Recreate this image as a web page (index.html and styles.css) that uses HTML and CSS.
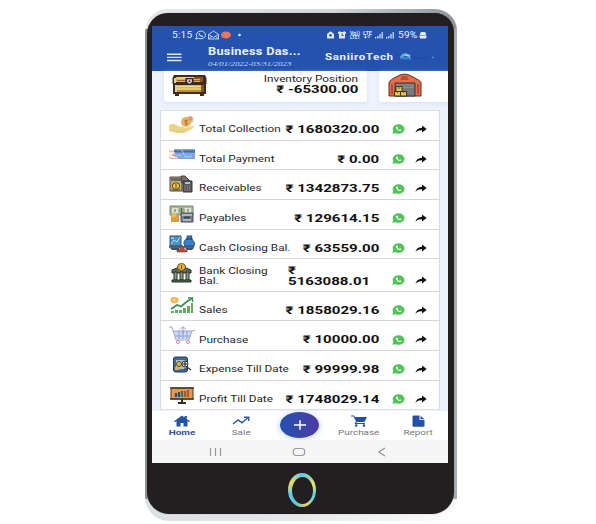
FILE: index.html
```html
<!DOCTYPE html>
<html lang="en">
<head>
<meta charset="utf-8">
<title>Business Dashboard</title>
<link rel="stylesheet" href="styles.css">
</head>
<body>
<svg class="defs" width="0" height="0">
  <symbol id="wa" viewBox="0 0 13 10" preserveAspectRatio="none"><path d="M.3 9.800 1.300 7A5.900 4.700 0 1 1 4 9.200Z" fill="#50c359"/><path d="M4.600 2.500c-1 .5-1 1.600.4 3s3.200 2 4.200 1.200c.6-.5.3-.8-1-1.200l-.8.5C6.400 5.700 5.800 5.100 5.500 4.500l.5-.6c-.3-1-.7-1.600-1.400-1.400Z" fill="#fff"/></symbol>
  <symbol id="share" viewBox="0 0 12 9" preserveAspectRatio="none"><path d="M7 .6 11.700 4 7 7.400V5.300C3.800 5.100 2 5.900.4 8 .9 4.800 3.300 2.900 7 2.700Z" fill="#111"/></symbol>
</svg>
<div class="phone">
  <div class="bezel">
    <div class="screen">
      <header class="header">
        <div class="status">
          <span class="clock"><b>5:15</b></span>
          <svg class="status-left" width="48" height="10" viewBox="0 0 48 10" fill="none" stroke="#cbdcf8">
            <path d="M.7 9 1.800 6.600A4.600 3.800 0 1 1 3.800 8.300Z"/><path d="M4 3.300c0 1.800 2 3 4 3" stroke-width="1.300"/>
            <path d="M13.500 4.500 18.500 1l5 3.500V9h-10Zm0 0 5 3 5-3M13.500 9l3.500-3m6.500 3L20 6" stroke-width=".9"/>
            <ellipse cx="31" cy="5" rx="4.900" ry="3.500" fill="#ed7657" stroke="none"/><circle cx="44.500" cy="5" r="1.300" fill="#e8f0ff" stroke="none"/>
          </svg>
          <svg class="status-right" width="68" height="10" viewBox="0 0 68 10" fill="#dce8fc">
            <path d="m0 4 3.500-2.800L7 4v4.500H0Z"/><circle cx="3.500" cy="5.300" r="1.300" fill="#2552ad"/>
            <path d="m11 2 2-.7 1 .7h2l1-.7 2 .7v1.500l-1 .5v4.500h-6V4l-1-.5Z"/><path d="M15 3.300v2.200h1.600" fill="none" stroke="#2552ad"/>
            <g class="tiny"><text x="23" y="4.600" textLength="10" lengthAdjust="spacingAndGlyphs">Vo))</text><text x="23" y="8.900" textLength="10" lengthAdjust="spacingAndGlyphs">LTE1</text><text x="36" y="4.600" textLength="9" lengthAdjust="spacingAndGlyphs">LTE</text></g>
            <path d="M38.500 5v3M37 6.500l1.500 1.800L40 6.500M42 8.300V5.500m-1.200 1L42 5.300l1.200 1.200" fill="none" stroke="#dce8fc" stroke-width=".8"/>
            <path d="M48 7h1.200v1.500H48zm2.200-1h1.200v2.500h-1.200zm2.200-2h1.200v4.500h-1.200zm2.200-2h1.200v6.500h-1.200zM59 7h1.200v1.500H59zm2.200-1h1.200v2.500h-1.200zm2.200-2h1.200v4.500h-1.200zm2.200-2h1.200v6.500h-1.200z"/>
          </svg>
          <span class="battery"><b>59%</b></span>
          <svg class="battery-icon" width="8" height="8" viewBox="0 0 8 8"><path d="M1 3 2 1h4l1 2v1H1ZM.5 4.500h7v2l-1 1h-5l-1-1Z" fill="#e4edfc"/></svg>
        </div>
        <div class="bar">
          <svg class="menu" width="15" height="9" viewBox="0 0 15 9"><path d="M0 1.300h14.500M0 4.400h14.500M0 7.500h14.500" stroke="#dce7fb" stroke-width="1.400"/></svg>
          <div class="titles"><h1><span>Business Das...</span></h1><p><span>04/01/2022-03/31/2023</span></p></div>
          <div class="brand"><span>SaniiroTech</span></div>
          <svg class="logo" width="38" height="10" viewBox="0 0 38 10"><path d="M1 6C2 1 8-.5 12 4L9 5C7 3 4 4 3 6Z" fill="#69abd8"/><path d="M1 7c3-3 8-3 12 .5H5Z" fill="#2b86ca"/><path d="M6 3c3 0 4 1 5 3" stroke="#c8e7f2" fill="none"/><path d="M14 6h16" stroke="#1f479f" stroke-width="1"/><circle cx="34" cy="5.500" r=".8" fill="#83a5dc"/></svg>
        </div>
      </header>

      <section class="positions">
        <article class="card inventory">
          <svg class="chest" width="35" height="23" viewBox="0 0 35 23"><path d="M2 1h31l1.500 3v6H34v10h-2v2h-4v-2H7v2H3v-2H1V10H.5V4Z" fill="#3d2b1c"/><path d="M4 3h26v5H4zm0 8h27v7H4z" fill="#d8b849"/><path d="M5 3.800h23M5 12.500h25M5 15h25" stroke="#f4e083" stroke-width="1.200"/><path d="M5 6.500h25M5 17h26" stroke="#9c6727"/><path d="M22 3h9v2h-9zm6 0h3v5h-3zm1 8h3v7h-3z" fill="#91502b"/><path d="M2 4h2v5H2zm1 7h2v7H3z" fill="#d6d0bb"/><path d="M13.500 4h8v4.500L17.500 11l-4-2.500Z" fill="#33251b"/><path d="M15 5.200h5v2.800l-2.500 2L15 8Z" fill="#d7ccb0"/><circle cx="17.500" cy="7.200" r=".9" fill="#33251b"/></svg>
          <div class="figures"><p class="caption"><span>Inventory Position</span></p><p class="amount"><span>₹ -65300.00</span></p></div>
        </article>
        <article class="card store">
          <svg width="34" height="24" viewBox="0 0 34 24"><path d="M1 9.500Q1 8 6 5l6-3q4.500-2 9 0l6 3q6 3 6 4.500V23H1Z" fill="#e86d4b" stroke="#533025"/><path d="M7 10h20v13H7Z" fill="#77797b" stroke="#43302a"/><path d="M8 12h18M8 14.500h18" stroke="#96989a" stroke-width=".8"/><path d="M13.500 4h6M12.500 6h8M4 11v10M30 11v10" stroke="#7d382d"/><path d="M6.500 18.500h6V23h-6zm6 0h6V23h-6zm-4.500-5h6v5H8z" fill="#e5c54d" stroke="#3d3522"/><path d="M11 13.500v2.500m-1.500 2.500V20m6-1.500V20" stroke="#6b5522"/></svg>
        </article>
      </section>

      <main class="ledger">
        <div class="row">
          <svg class="pic" width="28" height="20" viewBox="0 0 28 20"><circle cx="22" cy="4.500" r="3.300" fill="#f2b496"/><circle cx="18" cy="7" r="5" fill="#e7b25d"/><path d="M18 4.500v5M16.500 6h3M17 9h2.500" stroke="#8f6535" stroke-width=".9"/><circle cx="22.500" cy="3.500" r="1.500" fill="none" stroke="#db7569"/><path d="M1 10c4-2 7-.5 10 1.500h5c1 0 1 1.500-1 1.500h-4 7l6-2c3 0 2 2 0 3l-8 4H9L1 16Z" fill="#ebd589"/><path d="M2 15c6 0 8 2 15 1" stroke="#dfc678" fill="none"/></svg>
          <span class="name"><span>Total Collection</span></span><span class="value"><span>₹ 1680320.00</span></span><svg class="wa"><use href="#wa"/></svg><svg class="share"><use href="#share"/></svg>
        </div>
        <div class="row">
          <svg class="pic" width="28" height="20" viewBox="0 0 28 20"><path d="M6 4h21v10H6Z" fill="#80a8e2"/><path d="M6 5.300h21v2.300H6Z" fill="#5069a5"/><path d="m13 4 5 9M8 10.500h5m5 1h6" stroke="#a5c9ef"/><path d="M1 6h4l3 3H6l-2 1 5 2c2 1 1 2-1 1.500H3L1 12" fill="#fbece8" stroke="#dea4a4"/></svg>
          <span class="name"><span>Total Payment</span></span><span class="value"><span>₹ 0.00</span></span><svg class="wa"><use href="#wa"/></svg><svg class="share"><use href="#share"/></svg>
        </div>
        <div class="row">
          <svg class="pic" width="28" height="20" viewBox="0 0 28 20"><path d="M2 3h12v14H2Z" fill="#c5a96a" stroke="#4b4a48"/><path d="M3 4h10v3H3Z" fill="#6d6960"/><ellipse cx="8" cy="12" rx="3.700" ry="3.200" fill="#f1c846" stroke="#5b4824"/><path d="M8 10v4M4 16h8" stroke="#594624"/><path d="M13 2h4l5 5v2h-8Z" fill="#7d6d66" stroke="#48423f"/><path d="M15 7h9v11h-9Z" fill="#56585e" stroke="#303640"/><path d="M17 9h5" stroke="#aac2d1" stroke-width="2"/><path d="M16.500 12h6m-6 2h6m-6 2h6" stroke="#c79680" stroke-dasharray="1 1.300"/></svg>
          <span class="name"><span>Receivables</span></span><span class="value"><span>₹ 1342873.75</span></span><svg class="wa"><use href="#wa"/></svg><svg class="share"><use href="#share"/></svg>
        </div>
        <div class="row">
          <svg class="pic" width="28" height="20" viewBox="0 0 28 20"><path d="M2 2h23v9H2Z" fill="#a7b998" stroke="#788477"/><path d="M4 4h19v5H4Z" fill="#dce5d3"/><ellipse cx="13.500" cy="6.500" rx="3.500" ry="3" fill="#97aa7e"/><path d="M13.500 4v5M7 5v3m13-3v3" stroke="#57664b"/><path d="M3 11h8v7H3Z" fill="#db9c40"/><circle cx="6" cy="11" r="2.500" fill="#eeb95a"/><path d="M13 9h12v9H13Z" fill="#777f8c" stroke="#4b5059"/><path d="M14 11h10M15 16h8" stroke="#c0c9d0" stroke-width="1.500"/><path d="M16 13.500h6" stroke="#3f424a" stroke-width="2"/></svg>
          <span class="name"><span>Payables</span></span><span class="value"><span>₹ 129614.15</span></span><svg class="wa"><use href="#wa"/></svg><svg class="share"><use href="#share"/></svg>
        </div>
        <div class="row">
          <svg class="pic" width="28" height="20" viewBox="0 0 28 20"><path d="M2 2h11v10H2Z" fill="#4c91c8" stroke="#31516c"/><path d="m3 10 3-4 3 2 3-5" stroke="#afe1ee" fill="none"/><path d="M3 4h3" stroke="#d1edf1"/><path d="M19 2h5l-1 3c4 2 4 6 3 7h-9c-2-3-1-6 2-7Z" fill="#3980cc" stroke="#224d81"/><path d="M18 5h7" stroke="#203a55"/><path d="M1 13h25" stroke="#27364a" stroke-width="1.500"/><path d="M2 14h9v2H4Zm15 0h9l-2 2h-5Z" fill="#434e64"/><path d="m14 11 3 5h2v2H9v-2h2Z" fill="#b84b37" stroke="#713832" stroke-width=".6"/></svg>
          <span class="name"><span>Cash Closing Bal.</span></span><span class="value"><span>₹ 63559.00</span></span><svg class="wa"><use href="#wa"/></svg><svg class="share"><use href="#share"/></svg>
        </div>
        <div class="row bank">
          <svg class="pic" width="28" height="20" viewBox="0 0 28 20"><path d="m4 7 5-2h9l5 2v3H4Z" fill="#5c6950" stroke="#27312a"/><ellipse cx="13.500" cy="4" rx="4" ry="3.500" fill="#efb438" stroke="#684b22"/><path d="M13.500 2v4" stroke="#684b22"/><path d="M6 9h3v8H6zm6 0h3v8h-3zm6 0h3v8h-3z" fill="#8f9b7e" stroke="#29352d"/><path d="M4 17h19v2H4Z" fill="#596b4c" stroke="#1f3026"/></svg>
          <span class="name"><span>Bank Closing<br>Bal.</span></span><span class="value"><span>₹<br>5163088.01</span></span><svg class="wa"><use href="#wa"/></svg><svg class="share"><use href="#share"/></svg>
        </div>
        <div class="row">
          <svg class="pic" width="28" height="20" viewBox="0 0 28 20"><ellipse cx="6.500" cy="4" rx="4" ry="3" fill="#f3ae4a"/><path d="M6.500 2v4M4 4h5" stroke="#ffd895"/><path d="m3 13 6-4 4 1.500 6-5 5-3" fill="none" stroke="#398d58" stroke-width="1.800"/><path d="M20 2h4.500v4" fill="none" stroke="#398d58" stroke-width="1.300"/><path d="M3 15h3v2H3zm4-1h3v3H7zm4 0h3v3h-3zm4-2h3v5h-3zm4-2h3v7h-3zm4-3h2v10h-2z" fill="#5cab64"/></svg>
          <span class="name"><span>Sales</span></span><span class="value"><span>₹ 1858029.16</span></span><svg class="wa"><use href="#wa"/></svg><svg class="share"><use href="#share"/></svg>
        </div>
        <div class="row">
          <svg class="pic" width="28" height="20" viewBox="0 0 28 20"><path d="M5 6h19l-3 8H8Z" fill="#cbd9f4"/><path d="M1 2h3l4 13h13l3-9 3-1M5 6h19M7 11h15M11 6v8m4-8v8m4-8v8" fill="none" stroke="#919bd0" stroke-width=".9"/><path d="M15 9V2m-3 2.500L15 1.500l3 3" fill="none" stroke="#9b9bc0"/><circle cx="10" cy="17" r="1.500" fill="#fff" stroke="#d38392"/><circle cx="20" cy="17" r="1.500" fill="#fff" stroke="#d38392"/></svg>
          <span class="name"><span>Purchase</span></span><span class="value"><span>₹ 10000.00</span></span><svg class="wa"><use href="#wa"/></svg><svg class="share"><use href="#share"/></svg>
        </div>
        <div class="row">
          <svg class="pic" width="28" height="20" viewBox="0 0 28 20"><rect x="5.500" y="2" width="14" height="15" rx="2" fill="#426a90" stroke="#253c56"/><path d="M8 5h10v9H8Z" fill="#a5c3d1"/><circle cx="11" cy="9" r="2.500" fill="#dfb74e" stroke="#644923"/><path d="M7 12h4v3H7Z" fill="#d3b15e"/><circle cx="17" cy="9" r="3" fill="#e9dfc6" stroke="#333b41"/><path d="M17 6v5m-2-2h4m0 3 4 3m-7-1h4" stroke="#383530" stroke-width="1.200"/></svg>
          <span class="name"><span>Expense Till Date</span></span><span class="value"><span>₹ 99999.98</span></span><svg class="wa"><use href="#wa"/></svg><svg class="share"><use href="#share"/></svg>
        </div>
        <div class="row">
          <svg class="pic" width="28" height="20" viewBox="0 0 28 20"><path d="M3 3h22v11H3Z" fill="#e49a47" stroke="#513525"/><path d="M2 3h24M2 14h24" stroke="#423b2f" stroke-width="1.700"/><path d="M14 14v4m-4 0h8" stroke="#302d26" stroke-width="2"/><path d="M8 8v4m3-5v5" stroke="#354863" stroke-width="2.200"/><path d="M14 6v6" stroke="#477356" stroke-width="2.200"/><path d="M17 6v6m3-7v7" stroke="#a9543c" stroke-width="2.200"/></svg>
          <span class="name"><span>Profit Till Date</span></span><span class="value"><span>₹ 1748029.14</span></span><svg class="wa"><use href="#wa"/></svg><svg class="share"><use href="#share"/></svg>
        </div>
      </main>

      <nav class="tabs">
        <a class="tab active"><svg width="16" height="12" viewBox="0 0 16 12"><path d="M0 6.300 8 .5l2.500 2V1h2.300v3L16 6.300l-.9 1L13.500 6v5.500h-4V8h-3v3.500h-4V6L.9 7.300Z" fill="#2452a9"/></svg><span>Home</span></a>
        <a class="tab"><svg width="18" height="12" viewBox="0 0 18 12"><path d="m1 9 5-4 4 2.700L16 2.500M12 2.200h4.700V6" fill="none" stroke="#2d5cab" stroke-width="1.500"/></svg><span>Sale</span></a>
        <a class="fab"><svg width="14" height="12" viewBox="0 0 14 12"><path d="M1 6h12M7 1.200v9.600" stroke="#fff" stroke-width="1.500"/></svg></a>
        <a class="tab"><svg width="17" height="12" viewBox="0 0 17 12"><path d="M0 .5h3L4 2h12l-2.500 5H6l-.8 1H14v1H3.500L5 6.200 2.500 1.500H0Z" fill="#2550a8"/><circle cx="5.200" cy="10.500" r="1.300" fill="#2550a8"/><circle cx="13" cy="10.500" r="1.300" fill="#2550a8"/></svg><span>Purchase</span></a>
        <a class="tab"><svg width="13" height="12" viewBox="0 0 13 12"><path d="M1.500.5h6V5h5v6q0 .7-1 .7h-10q-1 0-1-.7V1.200q0-.7 1-.7ZM8.500.7l4 3.500h-4Z" fill="#2550a8"/></svg><span>Report</span></a>
      </nav>
      <div class="system">
        <svg width="14" height="10" viewBox="0 0 14 10"><path d="M1.500 1v8M6.500 1v8M11.500 1v8" stroke="#999" stroke-width="1.200"/></svg>
        <svg width="14" height="10" viewBox="0 0 14 10"><rect x="1.200" y="1.500" width="11.500" height="7" rx="3" fill="none" stroke="#999" stroke-width="1.100"/></svg>
        <svg width="14" height="10" viewBox="0 0 14 10"><path d="M10 1 3.800 5l6.200 4" fill="none" stroke="#909090" stroke-width="1.100"/></svg>
      </div>
    </div>
    <div class="home-button"><div></div></div>
  </div>
</div>
</body>
</html>
```

FILE: styles.css
```css
* { box-sizing: border-box; }
body { margin: 0; background: #fff; font-family: Roboto, sans-serif; color: #272727; }
h1, p { margin: 0; }
svg { display: block; flex: none; }
.defs { position: absolute; }

.phone {
  width: 312px; height: 512px; margin: 9px 0 0 145px; padding: 4px 3px 7px 2px;
  border-radius: 23px 22px 24px 24px;
  background:
    linear-gradient(90deg, #dcdfe2, #e6e8ea 50%, #fcfcfc) bottom / 100% 22px no-repeat,
    linear-gradient(90deg, #e5e9eb, #d3d8db 60%, #8b969d) top / 100% 20px no-repeat,
    linear-gradient(90deg, #8d9498 50%, #a5abaf 50%);
}
.bezel {
  height: 501px; padding: 13px 6px 0 5px; border-radius: 21px 19px 22px 22px;
  background: #231f20; box-shadow: 0 0 1px #777;
}
.screen { width: 296px; height: 437px; display: flex; flex-direction: column; overflow: hidden; background: #eef2fd; }

.header { height: 45px; flex: none; background: #2552ae; color: #eef4ff; }
.status { height: 17px; display: flex; align-items: center; padding-left: 20px; font-size: 9px; line-height: 10px; }
.status b { display: inline-block; font-weight: 400; letter-spacing: .2px; transform: scaleX(1.120); transform-origin: left; }
.clock { width: 23px; }
.status-right { margin-left: 84px; }
.tiny { font-size: 4.500px; font-weight: 700; }
.battery { width: 21px; margin-left: 3px; }
.bar { height: 28px; display: flex; align-items: flex-start; padding-left: 15px; white-space: nowrap; }
.menu { margin-top: 9.500px; }
.titles { width: 117px; margin-left: 26px; }
.titles h1 { margin-top: 3px; font-size: 10px; line-height: 12px; font-weight: 700; }
.titles span, .brand span { display: inline-block; letter-spacing: .25px; transform: scaleX(1.270); transform-origin: left; }
.titles p { margin-top: .5px; font: italic 7px/10px "Liberation Serif", serif; color: #c9dbf6; }
.titles p span { letter-spacing: 0; transform: scaleX(1.260); }
.brand { width: 74px; margin-top: 8px; font-size: 9px; line-height: 12px; font-weight: 700; }
.brand span { letter-spacing: .5px; transform: scaleX(1.280); }
.logo { margin-top: 9px; }

.positions { height: 39px; flex: none; display: flex; gap: 12px; padding-left: 12px; }
.card { height: 31px; background: #fff; border-radius: 0 0 3px 3px; box-shadow: 0 2px 4px #dbe2f3; }
.inventory { width: 203px; flex: none; display: flex; justify-content: space-between; padding: 3px 9px 0 8px; }
.store { width: 80px; flex: none; padding: 2px 0 0 9px; }
.figures { text-align: right; white-space: nowrap; }
.caption { margin-top: -1px; font-size: 9.500px; line-height: 11px; }
.amount { font-size: 10.500px; line-height: 11px; font-weight: 700; color: #111; }
.caption span, .amount span { display: inline-block; transform: scaleX(1.240); transform-origin: right; }
.amount span { transform: scaleX(1.430); }

.ledger {
  width: 280px; height: 300px; flex: none; margin-left: 8px;
  display: grid; grid-template-rows: repeat(5, 29.700px) 32.300px repeat(4, 29.700px);
  background: #fff; border: 1px solid #d6dae2; border-top-color: #dde1e9; border-bottom: 0;
}
.row {
  display: grid; grid-template-columns: 28px 82px 101px 25px 34px;
  align-items: center; padding-left: 7px; border-bottom: 1.500px solid #d5d7da; white-space: nowrap;
}
.row .pic { align-self: start; margin-top: 4px; }
.name { margin: 9px 0 0 3px; font-size: 9px; line-height: 9.500px; }
.name > span { display: inline-block; transform: scaleX(1.310); transform-origin: left; }
.value { margin-top: 8px; text-align: right; font-size: 10.500px; line-height: 11px; font-weight: 700; color: #111; }
.value > span { display: inline-block; transform: scaleX(1.435); transform-origin: right; }
.wa { width: 13px; height: 10px; margin: 8px 0 0 12.500px; }
.share { width: 12px; height: 9px; margin: 8px 0 0 10.500px; }
.bank .name { margin-top: 3px; }
.bank .value { margin: 1px 0 0 9.500px; text-align: left; line-height: 11px; }
.bank .value > span { transform-origin: left; }
.bank .wa, .bank .share { margin-top: 10px; }

.tabs { height: 29px; flex: none; display: grid; grid-template-columns: repeat(5, 59.200px); margin-top: 1px; background: #fff; box-shadow: 0 -1px 2px #eef1f8; }
.tab { display: flex; flex-direction: column; align-items: center; padding-top: 4px; font-size: 7.500px; line-height: 9px; color: #777; }
.tab span { margin-top: 1px; transform: scaleX(1.320); }
.active { color: #2452a9; font-weight: 700; }
.fab {
  width: 39px; height: 26px; margin-top: 1px; place-self: start center; display: grid; place-items: center;
  border-radius: 50%; background: linear-gradient(90deg, #2452b0, #4b3ba4); box-shadow: 0 1px 5px 2px #d6e1f9;
}
.system { flex: 1; display: flex; justify-content: space-between; align-items: center; padding: 0 59px 0 57px; background: #f5f5f5; }
.home-button { width: 28px; height: 34px; margin: 10px 0 0 136px; padding: 3.500px; border-radius: 50%; background: conic-gradient(#62c8ef, #91d5b1 30deg, #f2e766 60deg, #62d2e3 110deg, #6cd3e6 135deg, #efd957 160deg, #6cc3d6 200deg, #62c9ee 250deg, #f0dd5a 305deg, #62c8ef); }
.home-button div { height: 100%; border-radius: 50%; background: #231f20; }
```
